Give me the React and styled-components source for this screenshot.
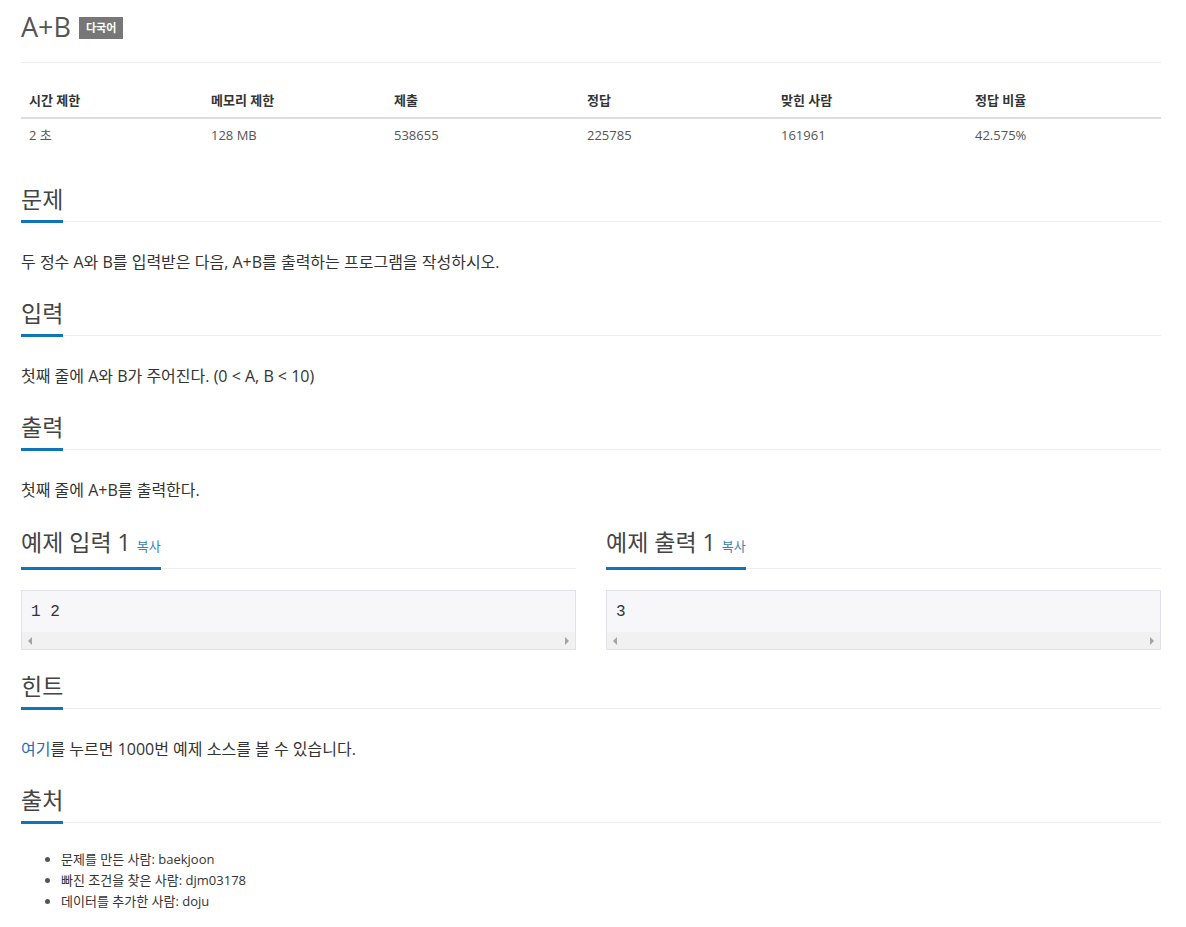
import React from "react";
import styled, { createGlobalStyle } from "styled-components";

const GlobalStyle = createGlobalStyle`
  body {
    margin: 0;
    background: #fff;
    font-family: "Open Sans", "Noto Sans CJK KR", sans-serif;
    color: #333;
  }
  * {
    box-sizing: border-box;
  }
`;

const Page = styled.div`
  width: 1161px;
  padding: 0 0 40px 21px;
`;

const TitleRow = styled.div`
  display: flex;
  align-items: center;
  gap: 8px;
  height: 63px;
  border-bottom: 1px solid #eee;
  padding-bottom: 10px;
`;

const Title = styled.h1`
  margin: 0;
  font-size: 27px;
  font-weight: 400;
  color: #555;
  line-height: 1;
`;

const Label = styled.span`
  background: #777;
  color: #fff;
  font-size: 11px;
  font-weight: 700;
  padding: 4px 7px;
  line-height: 1.3;
  margin-top: 4px;
`;

const Table = styled.table`
  width: 100%;
  border-collapse: collapse;
  margin-top: 19px;
  font-size: 13px;
  table-layout: fixed;
`;

const Th = styled.th`
  text-align: left;
  font-weight: 700;
  color: #333;
  padding: 8px 8px 7px;
  border-bottom: 2px solid #ddd;
  width: ${(p) => p.w}px;
  line-height: 20px;
`;

const Td = styled.td`
  padding: 6px 8px 8px;
  color: #555;
  line-height: 20px;
`;

const Section = styled.section`
  margin-top: ${(p) => p.top || 26}px;
`;

const Head = styled.div`
  display: flex;
  border-bottom: 1px solid #eee;
`;

const HeadText = styled.h2`
  margin: 0 0 -2px;
  font-size: 23px;
  font-weight: 400;
  color: #444;
  line-height: 28px;
  padding-bottom: 7px;
  border-bottom: 3px solid #0e76b8;
  display: flex;
  align-items: baseline;
  gap: 6px;
`;

const Copy = styled.span`
  font-size: 13px;
  color: #3a7fb5;
`;

const Text = styled.p`
  margin: 29px 0 0;
  font-size: 16px;
  line-height: 22px;
  color: #333;
`;

const Link = styled.a`
  color: #1f6fb0;
  text-decoration: none;
`;

const Samples = styled.div`
  display: grid;
  grid-template-columns: 1fr 1fr;
  gap: 30px;
  margin-top: 27px;
`;

const Pre = styled.div`
  margin-top: 21px;
  background: #f7f7f9;
  border: 1px solid #e1e1e8;
  height: 60px;
  display: flex;
  flex-direction: column;
`;

const Code = styled.div`
  flex: 1;
  padding: 11px 9px 0;
  font-family: "Liberation Mono", "DejaVu Sans Mono", monospace;
  font-size: 16px;
  line-height: 20px;
  color: #333;
`;

const Scrollbar = styled.div`
  height: 17px;
  background: #f1f1f1;
  display: flex;
  align-items: center;
  justify-content: space-between;
  padding: 0 6px;
`;

const Arrow = styled.span`
  width: 0;
  height: 0;
  border-top: 4px solid transparent;
  border-bottom: 4px solid transparent;
  ${(p) =>
    p.left
      ? "border-right: 4px solid #a3a3a3;"
      : "border-left: 4px solid #a3a3a3;"}
`;

const List = styled.ul`
  margin: 26px 0 0;
  padding-left: 40px;
  font-size: 13px;
  line-height: 21px;
  color: #333;
  li::marker {
    color: #555;
  }
`;

const stats = [
  ["시간 제한", "2 초", 182],
  ["메모리 제한", "128 MB", 183],
  ["제출", "538655", 193],
  ["정답", "225785", 194],
  ["맞힌 사람", "161961", 194],
  ["정답 비율", "42.575%", 194],
];

function Heading({ children, copy }) {
  return (
    <Head>
      <HeadText>
        {children}
        {copy && <Copy>복사</Copy>}
      </HeadText>
    </Head>
  );
}

function Sample({ title, value }) {
  return (
    <div>
      <Heading copy>{title}</Heading>
      <Pre>
        <Code>{value}</Code>
        <Scrollbar>
          <Arrow left />
          <Arrow />
        </Scrollbar>
      </Pre>
    </div>
  );
}

export default function App() {
  return (
    <Page>
      <GlobalStyle />
      <TitleRow>
        <Title>A+B</Title>
        <Label>다국어</Label>
      </TitleRow>
      <Table>
        <thead>
          <tr>
            {stats.map((s) => (
              <Th key={s[0]} w={s[2]}>
                {s[0]}
              </Th>
            ))}
          </tr>
        </thead>
        <tbody>
          <tr>
            {stats.map((s) => (
              <Td key={s[0]}>{s[1]}</Td>
            ))}
          </tr>
        </tbody>
      </Table>

      <Section top={32}>
        <Heading>문제</Heading>
        <Text>두 정수 A와 B를 입력받은 다음, A+B를 출력하는 프로그램을 작성하시오.</Text>
      </Section>
      <Section>
        <Heading>입력</Heading>
        <Text>첫째 줄에 A와 B가 주어진다. (0 &lt; A, B &lt; 10)</Text>
      </Section>
      <Section>
        <Heading>출력</Heading>
        <Text>첫째 줄에 A+B를 출력한다.</Text>
      </Section>

      <Samples>
        <Sample title="예제 입력 1" value="1 2" />
        <Sample title="예제 출력 1" value="3" />
      </Samples>

      <Section top={22}>
        <Heading>힌트</Heading>
        <Text>
          <Link href="#">여기</Link>를 누르면 1000번 예제 소스를 볼 수 있습니다.
        </Text>
      </Section>
      <Section>
        <Heading>출처</Heading>
        <List>
          <li>문제를 만든 사람: baekjoon</li>
          <li>빠진 조건을 찾은 사람: djm03178</li>
          <li>데이터를 추가한 사람: doju</li>
        </List>
      </Section>
    </Page>
  );
}
